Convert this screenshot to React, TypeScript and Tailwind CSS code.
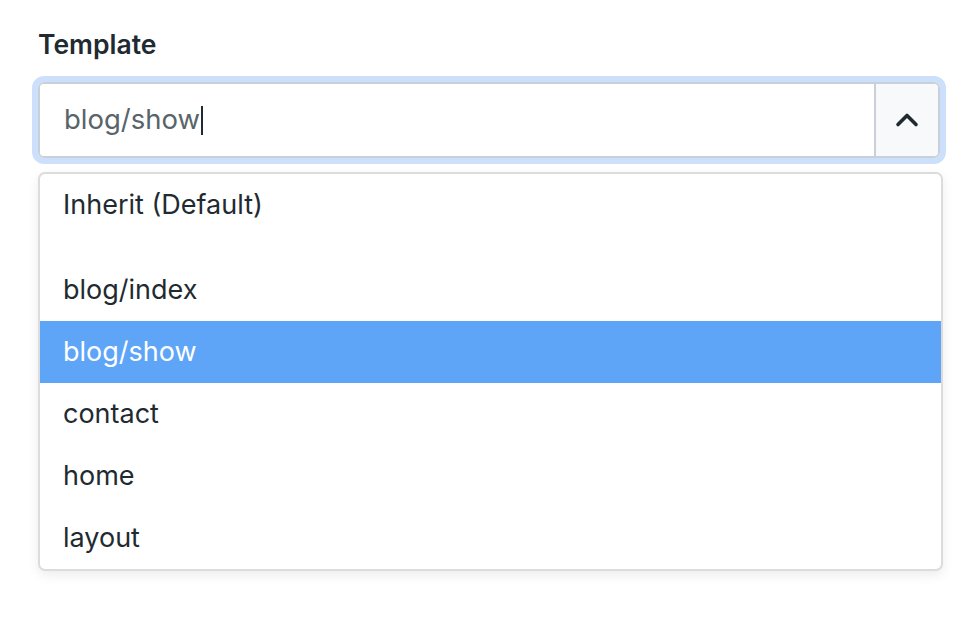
import { ChevronUp } from 'lucide-react';

const options = ['blog/index', 'blog/show', 'contact', 'home', 'layout'];

export default function App() {
  return (
    <div className="min-h-screen bg-white px-[38px] pt-[28px] text-[#1f2b31]" style={{ fontFamily: 'Inter, "Noto Sans", sans-serif' }}>
      <div className="text-[26.5px] font-semibold leading-[33px]">Template</div>
      <div className="mt-[21px] flex h-[76px] w-[902px] overflow-hidden rounded-[6px] border-2 border-[#c8d0d9] ring-[6px] ring-[#cde0fb]">
        <div className="flex flex-1 items-center bg-white pl-[24px] text-[27.5px] text-[#59646a]">
          <span>blog/show</span>
          <span className="ml-[1px] h-[29px] w-[2px] bg-[#1f2b31]" />
        </div>
        <div className="flex w-[64px] items-center justify-center border-l-2 border-[#c8d0d9] bg-[#f8f9fa]">
          <ChevronUp className="h-[36px] w-[36px] text-[#1f2b31]" strokeWidth={2.4} />
        </div>
      </div>
      <div className="mt-[14px] w-[905px] overflow-hidden rounded-[7px] border-2 border-[#dcdcdc] bg-white shadow-[0_4px_12px_rgba(0,0,0,0.08)]">
        <div className="flex h-[62px] items-center px-[23px] text-[27px]">Inherit (Default)</div>
        <div className="h-[23px]" />
        {options.map((o) => (
          <div
            key={o}
            className={
              o === 'blog/show'
                ? 'flex h-[62px] items-center bg-[#5ea5f8] px-[23px] text-[27px] text-white'
                : 'flex h-[62px] items-center px-[23px] text-[27px]'
            }
          >
            {o}
          </div>
        ))}
      </div>
    </div>
  );
}
